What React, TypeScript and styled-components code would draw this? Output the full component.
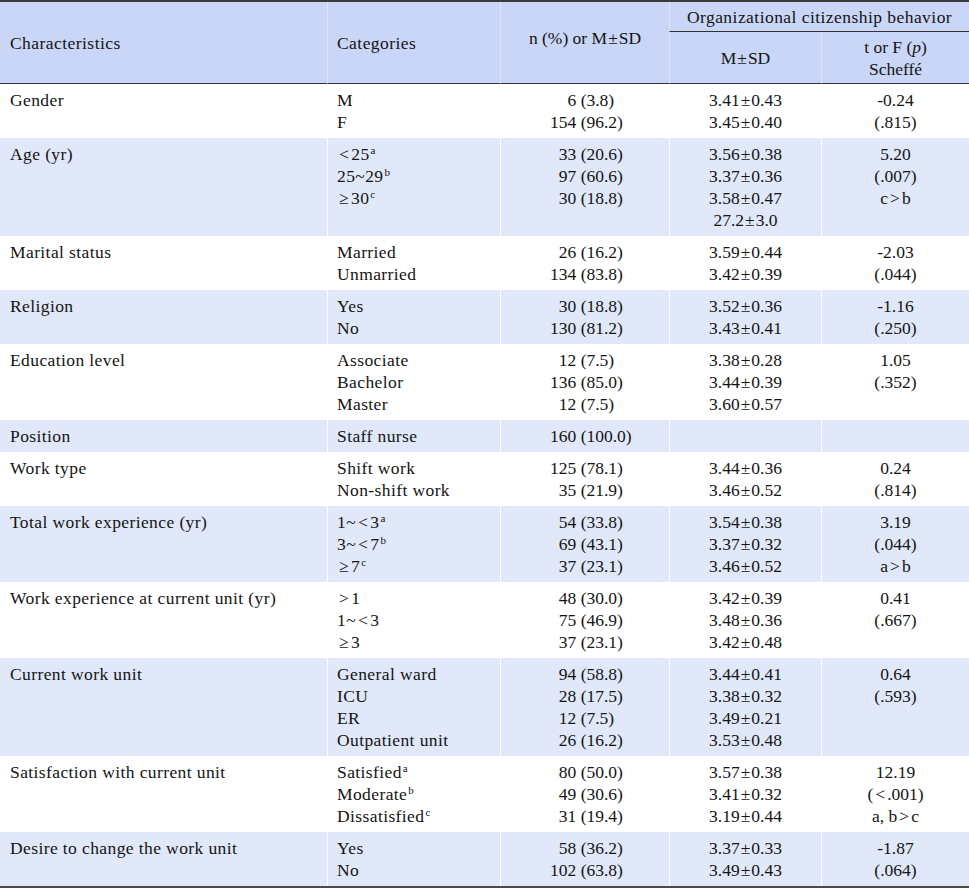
import React from 'react';
import styled, { createGlobalStyle } from 'styled-components';

const Global = createGlobalStyle`
  html, body { margin: 0; padding: 0; background: #ffffff; }
  body { font-family: "Liberation Serif", "Times New Roman", serif; color: #141414; }
`;

const Table = styled.table`
  width: 969px;
  border-collapse: separate;
  border-spacing: 0;
  table-layout: fixed;
  font-family: "Liberation Serif", "Times New Roman", serif;
  font-size: 17.5px;
  line-height: 22px;
  color: #141414;
  border-top: 2px solid #3a3a3a;
  border-bottom: 2px solid #4a4a4a;
`;

const HeadRow = styled.tr<{ $h: number }>`
  height: ${(p) => p.$h}px;
`;

const Th = styled.th<{ $first?: boolean; $center?: boolean; $bottom?: boolean; $raise?: boolean; $wide?: boolean }>`
  box-sizing: border-box;
  background: #c9d6f7;
  font-weight: normal;
  letter-spacing: ${(p) => (p.$wide ? '0.45px' : '0')};
  text-align: ${(p) => (p.$center ? 'center' : 'left')};
  vertical-align: middle;
  padding: 0 ${(p) => (p.$center ? '4px' : '9px')} ${(p) => (p.$raise ? '9px' : '0')} ${(p) => (p.$first ? '10px' : p.$center ? '4px' : '9px')};
  border-left: ${(p) => (p.$first ? 'none' : '1px solid #dde5fb')};
  border-bottom: ${(p) => (p.$bottom ? '1px solid #333' : 'none')};
  white-space: nowrap;
`;

const Tr = styled.tr<{ $alt: boolean }>`
  background: ${(p) => (p.$alt ? '#e0e8fa' : '#ffffff')};
`;

const Td = styled.td<{ $first?: boolean; $center?: boolean; $num?: boolean; $wide?: boolean }>`
  box-sizing: border-box;
  vertical-align: top;
  letter-spacing: ${(p) => (p.$wide ? '0.4px' : '0')};
  text-align: ${(p) => (p.$center ? 'center' : 'left')};
  padding: 5px 4px 5px ${(p) => (p.$first ? '10px' : p.$num ? '49px' : p.$center ? '4px' : '9px')};
  border-left: ${(p) => (p.$first ? 'none' : '1px solid #ffffff')};
  white-space: nowrap;
`;

const Line = styled.div`
  display: block;
  height: 22px;
`;

const IntPart = styled.span`
  display: inline-block;
  width: 3ch;
  text-align: right;
`;

const Sym = styled.span<{ $tight?: boolean }>`
  margin: 0 ${(p) => (p.$tight ? '1px' : '2px')};
`;

const Sup = styled.sup`
  font-size: 11px;
  line-height: 0;
  vertical-align: 6px;
  margin-left: 1px;
`;

const Ital = styled.i`
  font-style: italic;
`;

type Row = {
  c: string;
  cats: string[];
  n: string[];
  m: string[];
  t: string[];
};

const rows: Row[] = [
  { c: 'Gender', cats: ['M', 'F'], n: ['6 (3.8)', '154 (96.2)'], m: ['3.41±0.43', '3.45±0.40'], t: ['-0.24', '(.815)'] },
  { c: 'Age (yr)', cats: ['<25^a', '25~29^b', '≥30^c'], n: ['33 (20.6)', '97 (60.6)', '30 (18.8)'], m: ['3.56±0.38', '3.37±0.36', '3.58±0.47', '27.2±3.0'], t: ['5.20', '(.007)', 'c > b'] },
  { c: 'Marital status', cats: ['Married', 'Unmarried'], n: ['26 (16.2)', '134 (83.8)'], m: ['3.59±0.44', '3.42±0.39'], t: ['-2.03', '(.044)'] },
  { c: 'Religion', cats: ['Yes', 'No'], n: ['30 (18.8)', '130 (81.2)'], m: ['3.52±0.36', '3.43±0.41'], t: ['-1.16', '(.250)'] },
  { c: 'Education level', cats: ['Associate', 'Bachelor', 'Master'], n: ['12 (7.5)', '136 (85.0)', '12 (7.5)'], m: ['3.38±0.28', '3.44±0.39', '3.60±0.57'], t: ['1.05', '(.352)'] },
  { c: 'Position', cats: ['Staff nurse'], n: ['160 (100.0)'], m: [], t: [] },
  { c: 'Work type', cats: ['Shift work', 'Non-shift work'], n: ['125 (78.1)', '35 (21.9)'], m: ['3.44±0.36', '3.46±0.52'], t: ['0.24', '(.814)'] },
  { c: 'Total work experience (yr)', cats: ['1~<3^a', '3~<7^b', '≥7^c'], n: ['54 (33.8)', '69 (43.1)', '37 (23.1)'], m: ['3.54±0.38', '3.37±0.32', '3.46±0.52'], t: ['3.19', '(.044)', 'a > b'] },
  { c: 'Work experience at current unit (yr)', cats: ['>1', '1~<3', '≥3'], n: ['48 (30.0)', '75 (46.9)', '37 (23.1)'], m: ['3.42±0.39', '3.48±0.36', '3.42±0.48'], t: ['0.41', '(.667)'] },
  { c: 'Current work unit', cats: ['General ward', 'ICU', 'ER', 'Outpatient unit'], n: ['94 (58.8)', '28 (17.5)', '12 (7.5)', '26 (16.2)'], m: ['3.44±0.41', '3.38±0.32', '3.49±0.21', '3.53±0.48'], t: ['0.64', '(.593)'] },
  { c: 'Satisfaction with current unit', cats: ['Satisfied^a', 'Moderate^b', 'Dissatisfied^c'], n: ['80 (50.0)', '49 (30.6)', '31 (19.4)'], m: ['3.57±0.38', '3.41±0.32', '3.19±0.44'], t: ['12.19', '(<.001)', 'a, b > c'] },
  { c: 'Desire to change the work unit', cats: ['Yes', 'No'], n: ['58 (36.2)', '102 (63.8)'], m: ['3.37±0.33', '3.49±0.43'], t: ['-1.87', '(.064)'] },
];

function fmt(s: string): React.ReactNode {
  const [main, sup] = s.split('^');
  const parts = main.replace(/ > /g, '>').split(/([<>≥±])/).filter((x) => x !== '');
  return (
    <>
      {parts.map((p, i) =>
        /[<>≥±]/.test(p) ? (
          <Sym key={i} $tight={p === '±'}>
            {p}
          </Sym>
        ) : (
          <React.Fragment key={i}>{p}</React.Fragment>
        )
      )}
      {sup ? <Sup>{sup}</Sup> : null}
    </>
  );
}

function NValue({ s }: { s: string }) {
  const idx = s.indexOf(' ');
  return (
    <>
      <IntPart>{s.slice(0, idx)}</IntPart>
      {s.slice(idx)}
    </>
  );
}

export default function App() {
  return (
    <>
      <Global />
      <Table>
        <colgroup>
          <col style={{ width: 327 }} />
          <col style={{ width: 173 }} />
          <col style={{ width: 169 }} />
          <col style={{ width: 152 }} />
          <col style={{ width: 148 }} />
        </colgroup>
        <thead>
          <HeadRow $h={30}>
            <Th $first $wide rowSpan={2} $bottom>
              Characteristics
            </Th>
            <Th $wide rowSpan={2} $bottom>
              Categories
            </Th>
            <Th rowSpan={2} $center $bottom $raise>
              n (%) or M<Sym $tight>±</Sym>SD
            </Th>
            <Th colSpan={2} $center $wide $bottom>
              Organizational citizenship behavior
            </Th>
          </HeadRow>
          <HeadRow $h={52}>
            <Th $center $bottom>
              M<Sym $tight>±</Sym>SD
            </Th>
            <Th $center $bottom>
              <Line>
                t or F (<Ital>p</Ital>)
              </Line>
              <Line>Scheffé</Line>
            </Th>
          </HeadRow>
        </thead>
        <tbody>
          {rows.map((r, i) => (
            <Tr key={r.c} $alt={i % 2 === 1}>
              <Td $first $wide>
                <Line>{r.c}</Line>
              </Td>
              <Td $wide>
                {r.cats.map((c, j) => (
                  <Line key={j}>{fmt(c)}</Line>
                ))}
              </Td>
              <Td $num>
                {r.n.map((n, j) => (
                  <Line key={j}>
                    <NValue s={n} />
                  </Line>
                ))}
              </Td>
              <Td $center>
                {r.m.map((m, j) => (
                  <Line key={j}>{fmt(m)}</Line>
                ))}
              </Td>
              <Td $center>
                {r.t.map((t, j) => (
                  <Line key={j}>{fmt(t)}</Line>
                ))}
              </Td>
            </Tr>
          ))}
        </tbody>
      </Table>
    </>
  );
}
